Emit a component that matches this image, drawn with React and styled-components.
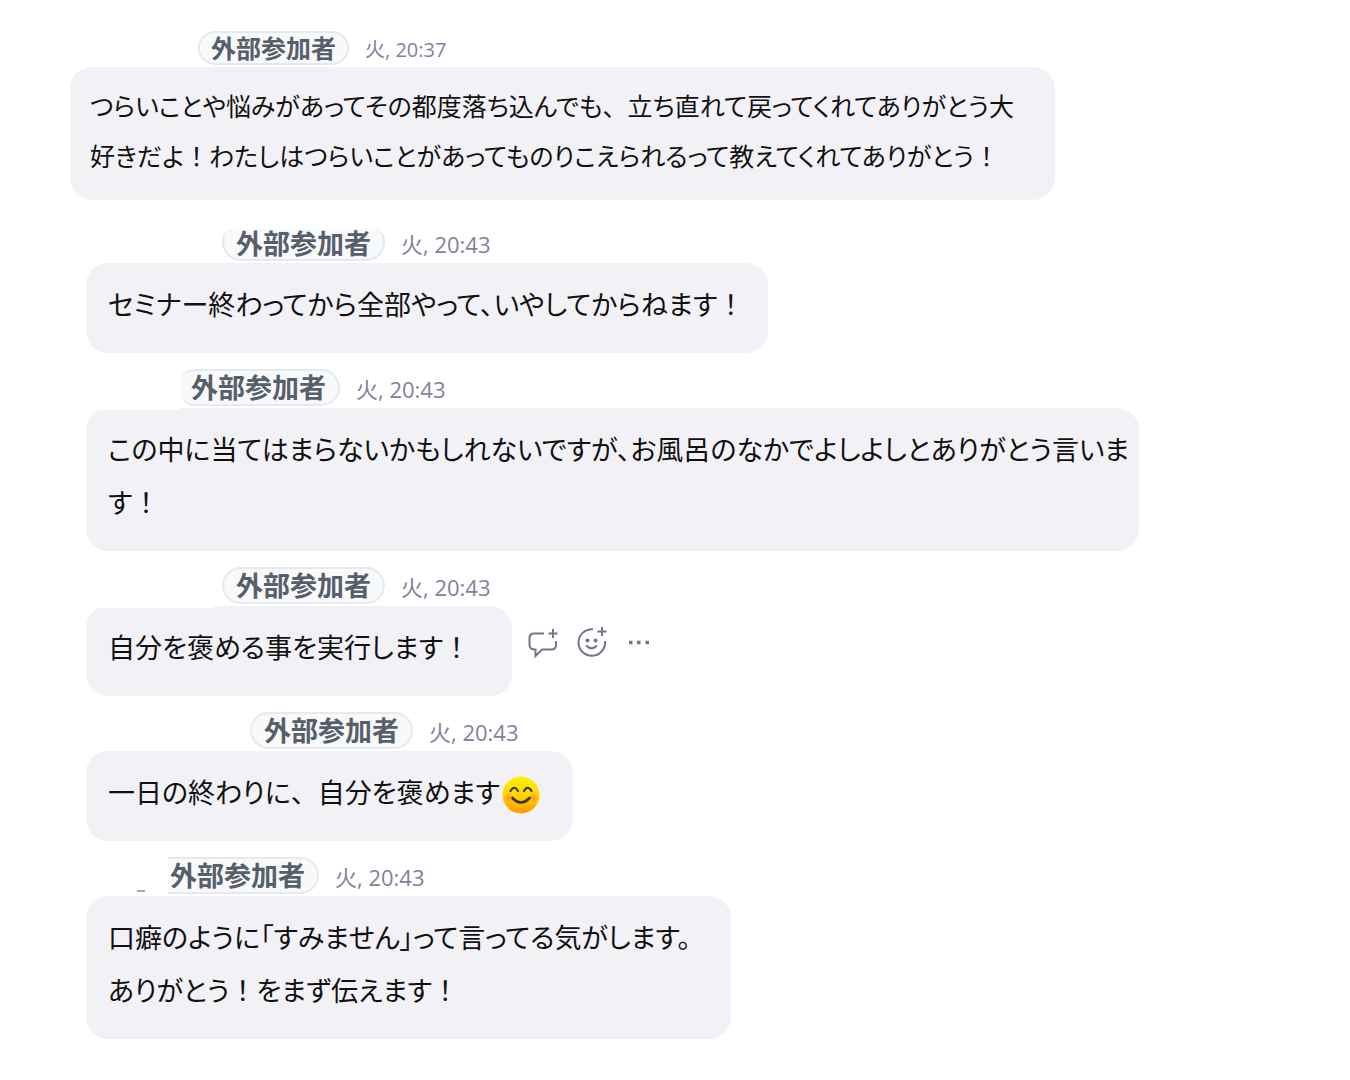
import React from "react";
import styled, { createGlobalStyle, css } from "styled-components";

const GlobalStyle = createGlobalStyle`
	* {
		box-sizing: border-box;
	}

	body {
		background: #fff;
		color: #111;
		font-family: "Noto Sans CJK JP", sans-serif;
		font-feature-settings: "palt";
		margin: 0;
	}
`;

const Thread = styled.main`
	display: flex;
	flex-direction: column;
	padding: 30px 86px 42px;
`;

const Message = styled.article`
	margin-bottom: 16px;

	${props =>
		props.$small &&
		css`
			margin: 0 0 24px -16px;
		`}
`;

const MessageHeader = styled.header`
	align-items: flex-end;
	display: flex;
	gap: 16px;
	height: ${props => (props.$small ? 37 : 39)}px;
	padding-bottom: 2px;
	padding-left: ${props => props.$indent}px;
	position: relative;
`;

const Underscore = styled.span`
	background: #a5a8b4;
	bottom: 4px;
	height: 2px;
	left: 51px;
	position: absolute;
	width: 8px;
`;

const badgeShapes = {
	top: css`
		border-radius: 12px 12px 19px 19px;
		border-top: none;
		line-height: 28px;
	`,
	edge: css`
		border-left: none;
		border-radius: 15px 19px 19px 15px;
		padding-left: 11px;
	`,
	left: css`
		border-left: none;
		border-radius: 0 19px 19px 0;
		padding-left: 2px;
	`
};

const Badge = styled.span`
	background: #f7f9fa;
	border: 2px solid #e6eaee;
	border-radius: 19px;
	color: #57606a;
	font-size: 27px;
	font-weight: 700;
	line-height: 31px;
	padding: 0 12px 2px;
	white-space: nowrap;

	${props =>
		props.$small &&
		css`
			font-size: 25px;
			line-height: 28px;
			padding: 0 11px 2px;
		`}

	${props => badgeShapes[props.$shape]}
`;

const Time = styled.time`
	color: #83829a;
	font-family: "Open Sans", "Noto Sans CJK JP", sans-serif;
	font-size: ${props => (props.$small ? 20 : 22)}px;
	line-height: ${props => (props.$small ? 30 : 34)}px;
	white-space: nowrap;
`;

const MessageRow = styled.div`
	align-items: flex-start;
	display: flex;
	gap: 14px;
`;

const Bubble = styled.div`
	background: #f2f1f6;
	border-radius: 22px;
	flex: 0 1 ${props => props.$basis}px;
	font-size: 27px;
	line-height: 53px;
	padding: 14px 6px 23px 22px;
	position: relative;

	${props =>
		props.$small &&
		css`
			font-size: 25px;
			line-height: 50px;
			padding: 13px 6px 20px 20px;
		`}

	${props =>
		props.$notch &&
		css`
			&::before {
				background: #fff;
				content: "";
				height: 2px;
				left: 0;
				position: absolute;
				top: 0;
				width: ${props.$notch}px;
			}
		`}

	p {
		margin: 0;
	}
`;

const FullWidth = styled.span`
	font-feature-settings: normal;
`;

const Actions = styled.div`
	display: flex;
	gap: 12px;
	padding-top: 18px;
`;

const ActionButton = styled.button`
	background: none;
	border: none;
	color: #75748a;
	cursor: pointer;
	height: 36px;
	padding: 0;
	width: 36px;

	svg {
		display: block;
	}
`;

const Smile = styled.svg`
	height: 38px;
	margin-left: 2px;
	vertical-align: -11px;
	width: 38px;
`;

const iconProps = {
	width: 36,
	height: 36,
	viewBox: "0 0 36 36",
	fill: "none",
	stroke: "currentColor",
	strokeWidth: 2,
	"aria-hidden": true
};

const ReplyIcon = () => (
	<svg {...iconProps}>
		<path d="M18 9.500H8Q3.500 9.500 3.500 14V21Q3.500 25.500 9.500 25.500V32L16 25.500H25Q30 25.500 30 21V17" />
		<path d="M27 5V14M22.500 9.500H31.500" />
	</svg>
);

const ReactIcon = () => (
	<svg {...iconProps}>
		<path d="M19 5.300A13.300 13.300 0 1 0 31 17" />
		<path d="M28 3V12M23.500 7.500H32.500M12 21.500Q17.500 27 23 21.500" />
		<circle cx="13.500" cy="16.500" r="2" fill="currentColor" stroke="none" />
		<circle cx="21.500" cy="16.500" r="2" fill="currentColor" stroke="none" />
	</svg>
);

const MoreIcon = () => (
	<svg {...iconProps}>
		<path d="M7 18.500H10.500M15 18.500H18.500M23.500 18.500H27" strokeWidth="3.500" />
	</svg>
);

const SmileEmoji = () => (
	<Smile viewBox="0 0 38 38" role="img" aria-label="笑顔">
		<defs>
			<linearGradient id="face" x1="0" y1="0" x2="0" y2="1">
				<stop offset="0" stopColor="#fff000" />
				<stop offset="0.5" stopColor="#ffd800" />
				<stop offset="1" stopColor="#ff9500" />
			</linearGradient>
			<radialGradient id="cheek">
				<stop offset="0" stopColor="#ff7a45" stopOpacity="0.7" />
				<stop offset="1" stopColor="#ff7a45" stopOpacity="0" />
			</radialGradient>
		</defs>
		<circle cx="19" cy="19" r="18.500" fill="url(#face)" />
		<circle cx="6.500" cy="21.500" r="5.500" fill="url(#cheek)" />
		<circle cx="31.500" cy="21.500" r="5.500" fill="url(#cheek)" />
		<g fill="none" stroke="#42331c" strokeWidth="2.200" strokeLinecap="round">
			<path d="M8.500 15Q12.500 8.500 16 15" />
			<path d="M22 15Q25.500 8.500 29.500 15" />
			<path d="M10.500 22Q19 31 27.500 22" strokeWidth="2.600" />
		</g>
	</Smile>
);

const messages = [
	{
		time: "20:37",
		indent: 128,
		basis: 985,
		small: true,
		wide: /([！、])/,
		lines: [
			"つらいことや悩みがあってその都度落ち込んでも、立ち直れて戻ってくれてありがとう大",
			"好きだよ！わたしはつらいことがあってものりこえられるって教えてくれてありがとう！"
		]
	},
	{
		time: "20:43",
		indent: 136,
		basis: 682,
		shape: "top",
		lines: ["セミナー終わってから全部やって、いやしてからねます！"]
	},
	{
		time: "20:43",
		indent: 94,
		basis: 1053,
		shape: "edge",
		notch: 94,
		lines: [
			"この中に当てはまらないかもしれないですが、お風呂のなかでよしよしとありがとう言いま",
			"す！"
		]
	},
	{
		time: "20:43",
		indent: 136,
		basis: 426,
		notch: 128,
		actions: true,
		lines: ["自分を褒める事を実行します！"]
	},
	{
		time: "20:43",
		indent: 164,
		basis: 487,
		emoji: true,
		wide: /([！、])/,
		lines: ["一日の終わりに、自分を褒めます"]
	},
	{
		time: "20:43",
		indent: 82,
		basis: 645,
		shape: "left",
		underscore: true,
		lines: ["口癖のように「すみません」って言ってる気がします。", "ありがとう！をまず伝えます！"]
	}
];

// Punctuation matched by `wide` keeps its full width, the rest is set proportionally
const renderLine = (line, wide) =>
	line
		.split(wide)
		.map((part, i) => (i % 2 === 1 ? <FullWidth key={i}>{part}</FullWidth> : part));

const ChatMessage = ({ message }) => {
	const { time, indent, basis, small, shape, notch, underscore, actions, emoji, lines, wide = /(！)/ } = message;
	return (
		<Message $small={small}>
			<MessageHeader $indent={indent} $small={small}>
				{underscore && <Underscore />}
				<Badge $small={small} $shape={shape}>
					外部参加者
				</Badge>
				<Time $small={small}>火, {time}</Time>
			</MessageHeader>
			<MessageRow>
				<Bubble $small={small} $basis={basis} $notch={notch}>
					{lines.map((line, i) => (
						<p key={line}>
							{renderLine(line, wide)}
							{emoji && i === lines.length - 1 && <SmileEmoji />}
						</p>
					))}
				</Bubble>
				{actions && (
					<Actions>
						<ActionButton type="button" aria-label="返信">
							<ReplyIcon />
						</ActionButton>
						<ActionButton type="button" aria-label="リアクション">
							<ReactIcon />
						</ActionButton>
						<ActionButton type="button" aria-label="その他">
							<MoreIcon />
						</ActionButton>
					</Actions>
				)}
			</MessageRow>
		</Message>
	);
};

const App = () => (
	<>
		<GlobalStyle />
		<Thread lang="ja">
			{messages.map((message, i) => (
				<ChatMessage key={i} message={message} />
			))}
		</Thread>
	</>
);

export default App;
